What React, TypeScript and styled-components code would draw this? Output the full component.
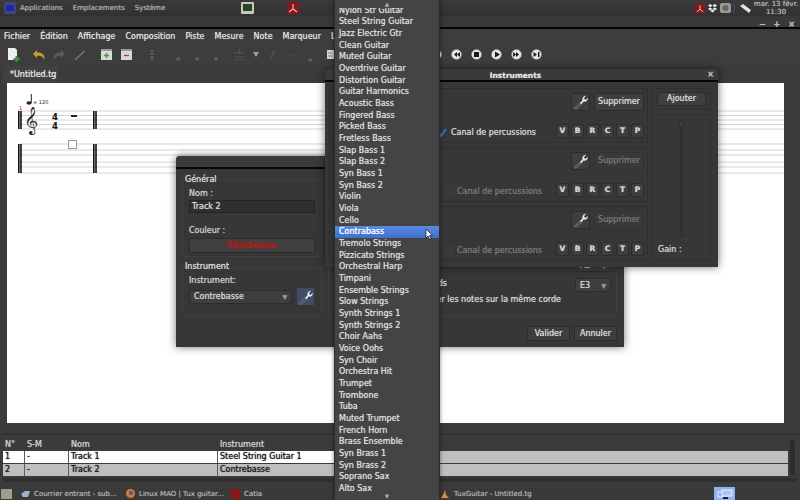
import React from "react";
import styled, { createGlobalStyle } from "styled-components";

const Global = createGlobalStyle`
  html, body { margin: 0; padding: 0; background: #3a3a3a; }
  * { box-sizing: border-box; }
  body { font-family: "DejaVu Sans", sans-serif; font-size: 8px; }
`;

const Desktop = styled.div`
  position: relative; width: 800px; height: 500px; overflow: hidden;
  display: flex; flex-direction: column; background: #3b3b3b; color: #ddd;
  text-shadow: 0 0 .7px currentColor;
`;
const TopPanel = styled.div`
  height: 16px; display: flex; align-items: center; padding-left: 4px; position: relative;
  background: linear-gradient(#3a3a3a, #323232); color: #a8a8a8; font-size: 7px;
`;
const PanelMenu = styled.span<{ $gap?: number }>`margin-left: ${p => p.$gap ?? 0}px;`;
const PanelIconSlot = styled.span<{ $gap: number }>`margin-left: ${p => p.$gap}px; display: flex;`;
const Tray = styled.div`margin-left: auto; display: flex; align-items: center; height: 16px; gap: 3px;`;
const Clock = styled.div`
  width: 48px; text-align: center; font-size: 7px; line-height: 8px; color: #b0b0b0; margin-left: -3px;
`;
const TitleBar = styled.div`
  height: 12px; display: flex; justify-content: flex-end; align-items: center; gap: 8px; padding: 4px 5px 0 0;
  background: linear-gradient(#383838, #3a3a3a); color: #bbb; font-size: 8px; font-weight: 700;
`;
const BlackLine = styled.div`height: 2px; background: #050505; margin-top: -1px;`;
const MenuBar = styled.div`
  height: 15px; display: flex; align-items: center; gap: 10px; padding-left: 4px; background: #3d3d3d;
  color: #dedede; font-size: 8px;
`;
const Toolbar = styled.div`height: 22px; display: flex; align-items: center; padding-left: 3px; background: #3d3d3d;`;
const ToolSlot = styled.div<{ $gap: number }>`
  width: 20px; height: 20px; display: flex; align-items: center; justify-content: center; margin-left: ${p => p.$gap}px;
`;
const TabBar = styled.div`height: 17px; display: flex; padding-left: 3px; align-items: flex-end; background: #3b3b3b;`;
const Tab = styled.div`
  width: 55px; height: 17px; background: #414141; border-radius: 2px 2px 0 0; padding-left: 7px;
  font-size: 8px; line-height: 17px; color: #e2e2e2; white-space: nowrap;
`;
const ScoreArea = styled.div`height: 340px; padding-left: 7px; padding-right: 16px; background: #3b3b3b;`;
const ScorePage = styled.div`height: 340px; background: #fff;`;
const HScroll = styled.div`height: 16px; padding: 10px 2px 0; background: #3b3b3b;`;
const HScrollBar = styled.div`height: 2px; background: #333;`;

const TrackArea = styled.div`height: 39px; display: flex; padding-left: 3px; background: #3b3b3b;`;
const TrackTable = styled.div`width: 785px; display: flex; flex-direction: column; gap: 1px;`;
const VScroll = styled.div`width: 5px; margin: 1px 0 2px 2px; background: #2d2d2d; border-radius: 2px;`;
const TableRow = styled.div`
  height: 12px; display: grid; grid-template-columns: 21px 43px 148px 180px 1fr; gap: 1px; background: #5c5c5c;
`;
const TableHead = styled(TableRow)`height: 11px; background: #3b3b3b;`;
const HeadCell = styled.div`padding-left: 2px; line-height: 11px; font-size: 8px; color: #ccc; background: #3b3b3b;`;
const BodyCell = styled.div<{ $bg: string }>`
  padding-left: 2px; line-height: 12px; font-size: 8px; color: #1c1c1c; background: ${p => p.$bg};
  overflow: hidden; white-space: nowrap; text-shadow: 0 0 1px #1c1c1c;
`;
const Gutter = styled.div`height: 10px; padding: 1px 2px; background: #3b3b3b;`;
const GutterBar = styled.div`height: 4px; background: #2f2f2f; border-radius: 2px;`;
const TaskBar = styled.div`
  height: 13px; display: flex; align-items: center; background: #3a3a3a; color: #a8a8a8; font-size: 7px;
`;
const TaskItem = styled.div<{ $w: number }>`width: ${p => p.$w}px; display: flex; align-items: center; gap: 4px; white-space: nowrap;`;
const WorkspaceActive = styled.div`
  width: 21px; height: 13px; background: #8fb0f2; display: flex; align-items: center; justify-content: center; margin-left: auto; margin-right: 65px;
`;

const Window = styled.div<{ $x: number; $y: number; $w: number; $h: number; $z: number }>`
  position: absolute; left: ${p => p.$x}px; top: ${p => p.$y}px; width: ${p => p.$w}px; height: ${p => p.$h}px; z-index: ${p => p.$z};
  background: #373737; border-radius: 4px 4px 0 0; display: flex; flex-direction: column;
  box-shadow: 0 0 9px rgba(0,0,0,.55);
`;
const WinTitle = styled.div`
  height: 11px; flex: none; text-align: center; padding: 2px 12px 0 0; line-height: 9px; font-size: 7.5px; font-weight: 700; color: #ddd; position: relative;
  background: #3a3a3a; border-radius: 4px 4px 0 0;
`;
const WinClose = styled.span`position: absolute; right: 4px; top: 1px; color: #bbb; font-size: 8px; font-weight: 700;`;
const WinRule = styled.div`height: 2px; flex: none; background: #050505;`;

const TrackBody = styled.div`
  flex: 1; padding: 10px 7px 6px 6px; display: grid; grid-template-columns: 140px 1fr; grid-template-rows: 78px 49px 1fr; gap: 10px 6px;
`;
const Group = styled.div<{ $row?: string; $col?: string }>`
  border: 1px solid #3f3f3f; display: flex; flex-direction: column;
  ${p => p.$row ? `grid-row: ${p.$row};` : ""} ${p => p.$col ? `grid-column: ${p.$col};` : ""}
`;
const GroupTitle = styled.div<{ $lift: number }>`font-size: 8px; color: #d8d8d8; line-height: 10px; padding-left: 2px; margin-top: -${p => p.$lift}px;`;
const FieldLabel = styled.div<{ $top?: number }>`font-size: 8px; line-height: 10px; color: #c8c8c8; margin-top: ${p => p.$top ?? 0}px;`;
const GroupInner = styled.div`padding: 4px 6px 0 6px; display: flex; flex-direction: column;`;
const NameInput = styled.div`
  height: 13px; margin-top: 1px; background: #2f2f2f; border: 1px solid #242424; padding-left: 2px; line-height: 11px; font-size: 8px; color: #d4d4d4;
`;
const ColorButton = styled.div`
  height: 15px; margin-top: 2px; background: #404040; border: 1px solid #2b2b2b; text-align: center; line-height: 13px; font-size: 8px; color: #d01010;
`;
const InstrumentRow = styled.div`display: flex; align-items: center; gap: 5px; margin-top: 2px;`;
const Combo = styled.div<{ $w: number }>`
  width: ${p => p.$w}px; height: 14px; background: #3e3e3e; border: 1px solid #2d2d2d; border-radius: 2px; display: flex; align-items: center;
  justify-content: space-between; padding: 0 4px; font-size: 8px; color: #d0d0d0;
`;
const ComboArrow = styled.span`font-size: 6px; color: #999;`;
const BlueTool = styled.div`width: 17px; height: 17px; background: #3f4d6a; display: flex; align-items: center; justify-content: center;`;
const TuningGroup = styled(Group)`justify-content: flex-end; padding: 0 5px 9px;`;
const TuningRow = styled.div<{ $below: number }>`display: flex; justify-content: flex-end; align-items: center; height: 14px; margin-bottom: ${p => p.$below}px;`;
const TuningLabel = styled.span<{ $right: number; $raise?: number }>`
  margin-right: ${p => p.$right}px; padding-bottom: ${p => p.$raise ?? 0}px; color: #d0d0d0; font-size: 8px; white-space: nowrap;
`;
const Footer = styled.div`grid-column: 1 / 3; display: flex; justify-content: flex-end; align-items: flex-end; gap: 4px;`;
const ActionButton = styled.div`
  width: 43px; height: 15px; background: #3e3e3e; border: 1px solid #2c2c2c; border-radius: 2px; text-align: center; line-height: 13px; font-size: 8px; color: #d8d8d8;
`;

const InstrumentsBody = styled.div`flex: 1; display: grid; grid-template-columns: 1fr 59px; gap: 4px; padding: 6px 7px 6px 4px;`;
const ChannelColumn = styled.div`display: flex; flex-direction: column; gap: 4px;`;
const ChannelRow = styled.div`
  height: 55px; border: 1px solid #2f2f2f; padding: 4px 3px; display: flex; flex-direction: column; justify-content: space-between;
`;
const ChannelLine = styled.div`display: flex; justify-content: flex-end; align-items: center; gap: 4px;`;
const ToolButton = styled.div`
  width: 19px; height: 18px; background: #3e3e3e; border: 1px solid #2c2c2c; border-radius: 2px; display: flex; align-items: center; justify-content: center;
`;
const RemoveButton = styled.div<{ $off?: boolean }>`
  width: 50px; height: 18px; background: ${p => p.$off ? "#393939" : "#3e3e3e"}; border: 1px solid ${p => p.$off ? "#333" : "#2c2c2c"}; border-radius: 2px;
  text-align: center; line-height: 16px; font-size: 8px; color: ${p => p.$off ? "#757575" : "#d8d8d8"};
`;
const PercLabel = styled.span<{ $off?: boolean; $right: number }>`
  font-size: 8px; white-space: nowrap; padding-top: 3px; color: ${p => p.$off ? "#777" : "#d0d0d0"}; margin-right: ${p => p.$right}px;
`;
const PercBox = styled.span`width: 7px; height: 7px; margin: 3px 1px 0 0; border: 1px solid #424242;`;
const TickMark = styled.svg`margin-top: 2px;`;
const MiniButtons = styled.div`display: flex; gap: 2px;`;
const MiniButton = styled.div`
  width: 13px; height: 14px; background: #3e3e3e; border: 1px solid #2c2c2c; border-radius: 2px; text-align: center; line-height: 12px; font-size: 7.5px; font-weight: 700; color: #cfcfcf;
`;
const SideColumn = styled.div`display: flex; flex-direction: column; gap: 4px;`;
const AddBox = styled.div`height: 22px; border: 1px solid #2f2f2f; padding: 3px 4px;`;
const AddButton = styled.div`height: 14px; background: #3f3f3f; border: 1px solid #2c2c2c; border-radius: 2px; text-align: center; line-height: 12px; font-size: 8px; color: #d8d8d8;`;
const GainBox = styled.div`flex: 1; border: 1px solid #2f2f2f; display: flex; flex-direction: column; align-items: center;`;
const SliderTrack = styled.div`flex: 1; width: 3px; background: #313131; position: relative; margin: 5px 0 1px;`;
const SliderThumb = styled.div`
  position: absolute; left: -2px; top: 0; width: 7px; height: 7px; border-radius: 50%; background: #3c3c3c; border: 1px solid #2a2a2a;
`;
const GainLabel = styled.div`align-self: stretch; height: 21px; border-top: 1px solid #3c3c3c; padding-left: 5px; line-height: 20px; font-size: 8px; color: #d0d0d0;`;

const DropMenu = styled.div`
  position: absolute; left: 334px; top: 0; width: 106px; height: 500px; z-index: 5; background: #444; border-left: 1px solid #2c2c2c; border-right: 1px solid #2c2c2c;
  display: flex; flex-direction: column; box-shadow: 0 0 4px rgba(0,0,0,.5);
`;
const ScrollCap = styled.div`height: 8px; flex: none; text-align: center; line-height: 8px; font-size: 5px; color: #aaa;`;
const MenuList = styled.div`flex: 1; overflow: hidden; display: flex; flex-direction: column;`;
const MenuRow = styled.div<{ $active?: boolean }>`
  height: 11.68px; flex: none; padding-left: 4px; line-height: 11.68px; font-size: 8px; white-space: nowrap; color: ${p => p.$active ? "#fff" : "#dadada"};
  background: ${p => p.$active ? "linear-gradient(#5a8ae0, #3f70c8)" : "transparent"}; position: relative;
  &:first-child { margin-top: -3.4px; }
`;
const Cursor = styled.svg`position: absolute; left: 90px; top: 3px;`;
const WorkspaceFirst = styled.svg`margin-left: 1px;`;

const Wrench = ({ s = 16 }: { s?: number }) => (
  <svg width={s} height={s} viewBox="0 0 16 16">
    <path d="M1.5 14.5 L7 8.5 L8.8 10 L3 15.5Z" fill="#4e4e4e" stroke="#999" strokeWidth=".5" />
    <path d="M7 9 L9.5 6.2 C9 4 10.5 1.8 13 1.8 L11 4.2 L12.3 6 L14.8 4 C15 6.6 12.8 8.3 10.6 7.6 L8.5 10.2Z" fill="#e8e8e8" />
  </svg>
);

const Circle = ({ d }: { d: string }) => (
  <svg width="11" height="11" viewBox="0 0 11 11">
    <circle cx="5.5" cy="5.5" r="5" fill="#e6e6e6" stroke="#888" strokeWidth=".5" />
    <path d={d} fill="#1a1a1a" />
  </svg>
);

const dim = "#5d5d5d";
const NoteIcon = ({ y = 12 }: { y?: number }) => (
  <svg width="10" height="16" viewBox="0 0 10 16"><ellipse cx="4" cy={y} rx="2" ry="1.5" fill={dim} /><path d={`M5.5 ${y}V${y - 2}`} stroke={dim} /></svg>
);

const tools: { gap: number; node: React.ReactNode }[] = [
  { gap: 0, node: <svg width="13" height="15" viewBox="0 0 13 15"><path d="M1 1h7l2 2v10H1z" fill="#efefef" /><path d="M8.5 9h2v2h2v2h-2v2h-2v-2h-2v-2h2z" fill="#3f9a3c" /></svg> },
  { gap: 6, node: <svg width="14" height="12" viewBox="0 0 14 12"><path d="M1 5 L5 1 V3.5 C10 3.3 13 5.5 12.5 11 C11.5 8 9 6.5 5 6.8 V9z" fill="#c9a02c" /></svg> },
  { gap: 0, node: <svg width="14" height="12" viewBox="0 0 14 12"><path d="M13 5 L9 1 V3.5 C4 3.3 1 5.5 1.5 11 C2.5 8 5 6.5 9 6.8 V9z" fill="#5b5b5b" /></svg> },
  { gap: 1, node: <svg width="12" height="12" viewBox="0 0 12 12"><path d="M1 11 L10.5 2" stroke="#8a6f4e" strokeWidth="1.6" /></svg> },
  { gap: 6, node: <svg width="11" height="11" viewBox="0 0 11 11"><rect width="11" height="11" fill="#d8d8d8" /><rect width="11" height="2" fill="#9a9a9a" /><path d="M5.5 4v5M3 6.5h5" stroke="#3f9a3c" strokeWidth="1.3" /></svg> },
  { gap: 0, node: <svg width="11" height="11" viewBox="0 0 11 11"><rect width="11" height="11" fill="#d8d8d8" /><rect width="11" height="2" fill="#9a9a9a" /><path d="M3 6.5h5" stroke="#b03a3a" strokeWidth="1.3" /></svg> },
  { gap: 6, node: <svg width="6" height="12" viewBox="0 0 6 12"><path d="M3 1v10" stroke={dim} strokeWidth="3" strokeDasharray="2 1" /></svg> },
  { gap: 7, node: <NoteIcon /> },
  { gap: -1, node: <NoteIcon /> },
  { gap: -1, node: <NoteIcon /> },
  { gap: 2, node: <svg width="12" height="14" viewBox="0 0 12 14"><path d="M1 5h10M2 9h8M1 12h10" stroke={dim} strokeDasharray="2 1" /><path d="M6 1v5" stroke={dim} /></svg> },
  { gap: -3, node: <svg width="6" height="5" viewBox="0 0 6 5"><path d="M0 0h6L3 5z" fill="#a0a0a0" /></svg> },
  { gap: -4, node: <svg width="8" height="10" viewBox="0 0 8 10"><path d="M2 9L6 1" stroke={dim} /></svg> },
  { gap: 0, node: <svg width="8" height="4" viewBox="0 0 8 4"><path d="M1 2h6" stroke="#4d4d4d" /></svg> },
  { gap: -1, node: <NoteIcon y={13} /> },
  { gap: -1, node: <svg width="7" height="9" viewBox="0 0 7 9"><rect width="7" height="9" fill="#d0d0d0" /><path d="M1 3h5M1 6h5" stroke="#888" /></svg> },
];

const transport = [
  "M6 3L3 5.5 6 8zM9 3L6 5.5 9 8z",
  "M3 3h5v5H3z",
  "M4 2.5L9 5.5 4 8.5z",
  "M2 3L5 5.5 2 8zM5 3L8 5.5 5 8z",
  "M2.5 3L6 5.5 2.5 8zM7 3h1.5v5H7z",
];

const instruments = [
  "Nylon Str Guitar", "Steel String Guitar", "Jazz Electric Gtr", "Clean Guitar", "Muted Guitar", "Overdrive Guitar",
  "Distortion Guitar", "Guitar Harmonics", "Acoustic Bass", "Fingered Bass", "Picked Bass", "Fretless Bass", "Slap Bass 1",
  "Slap Bass 2", "Syn Bass 1", "Syn Bass 2", "Violin", "Viola", "Cello", "Contrabass", "Tremolo Strings", "Pizzicato Strings",
  "Orchestral Harp", "Timpani", "Ensemble Strings", "Slow Strings", "Synth Strings 1", "Synth Strings 2", "Choir Aahs",
  "Voice Oohs", "Syn Choir", "Orchestra Hit", "Trumpet", "Trombone", "Tuba", "Muted Trumpet", "French Horn", "Brass Ensemble",
  "Syn Brass 1", "Syn Brass 2", "Soprano Sax", "Alto Sax",
];

const Score = () => {
  const staff = [28, 32.5, 37, 41.5, 46];
  const tab = [61, 67, 72, 79, 84, 90];
  return (
    <svg width="777" height="340" viewBox="0 0 777 340">
      {[...staff, ...tab].map(y => <path key={y} d={`M12 ${y}H777`} stroke="#d4d4d4" strokeWidth="1" />)}
      {[11, 86].map(x => (
        <g key={x} fill="#111">
          <rect x={x} y="28" width="1.6" height="18" /><rect x={x + 2.2} y="28" width="1.6" height="18" />
          <rect x={x} y="61" width="1.6" height="29" /><rect x={x + 2.2} y="61" width="1.6" height="29" />
        </g>
      ))}
      <text x="12" y="27" fontSize="5" fill="#e02020" fontFamily="DejaVu Sans">1</text>
      <ellipse cx="22" cy="20" rx="2.6" ry="1.8" fill="#222" />
      <path d="M24.3 20V11" stroke="#222" strokeWidth="1" />
      <text x="26" y="21" fontSize="5" fill="#333" fontFamily="DejaVu Sans">= 120</text>
      <text x="17" y="45" fontSize="24" fill="#222" fontFamily="DejaVu Sans">𝄞</text>
      <text x="45" y="36.5" fontSize="8.5" fontWeight="700" fill="#111" fontFamily="DejaVu Sans">4</text>
      <text x="45" y="46" fontSize="8.5" fontWeight="700" fill="#111" fontFamily="DejaVu Sans">4</text>
      <rect x="64" y="32" width="6" height="2" fill="#222" />
      <rect x="61.5" y="57.5" width="8" height="8" fill="#fff" stroke="#999" />
    </svg>
  );
};

export default function App() {
  return (
    <Desktop>
      <Global />
      <TopPanel>
        <svg width="12" height="12" viewBox="0 0 12 12"><rect width="12" height="12" rx="2" fill="#3a4a7a" /><rect x="2" y="3" width="8" height="6" fill="#2420b0" /></svg>
        <PanelMenu $gap={4}>Applications</PanelMenu>
        <PanelMenu $gap={10}>Emplacements</PanelMenu>
        <PanelMenu $gap={10}>Système</PanelMenu>
        <PanelIconSlot $gap={76}>
          <svg width="13" height="12" viewBox="0 0 13 12"><rect width="13" height="12" rx="1" fill="#c8c8b8" /><rect x="2" y="2" width="9" height="7" fill="#27432c" /></svg>
        </PanelIconSlot>
        <PanelIconSlot $gap={33}>
          <svg width="12" height="12" viewBox="0 0 12 12"><rect width="12" height="12" fill="#8a1616" /><path d="M6 2v5L2 10M6 7l4 3" stroke="#d8b8c8" strokeWidth="1.2" fill="none" /></svg>
        </PanelIconSlot>
        <Tray>
          <svg width="10" height="11" viewBox="0 0 12 12"><rect width="12" height="12" fill="#8a1616" /><path d="M6 2v5L2 10M6 7l4 3" stroke="#d8b8c8" strokeWidth="1.2" fill="none" /></svg>
          <svg width="9" height="9" viewBox="0 0 9 9"><path d="M2.2 0L4.5 1.6 2.2 3.2 0 1.6zM6.8 0L9 1.6 6.8 3.2 4.5 1.6zM2.2 3.4L4.5 5 2.2 6.6 0 5zM6.8 3.4L9 5 6.8 6.6 4.5 5zM4.5 5.6L6.5 7 4.5 8.6 2.5 7z" fill="#f0f0f0" /></svg>
          <svg width="16" height="12" viewBox="0 0 16 12"><rect x="0" y="1" width="11" height="10" rx="2" fill="#9a9a9a" /><circle cx="5.5" cy="6" r="3" fill="#666" /><path d="M13 1c2 3 2 7 0 10" stroke="#3c5a8a" fill="none" /></svg>
          <svg width="13" height="11" viewBox="0 0 13 11"><path d="M1 3L4 1 12 7 10 10z" fill="#e2e2e2" /></svg>
          <Clock>mar. 13 févr.<br />11:30</Clock>
        </Tray>
      </TopPanel>
      <TitleBar><span>−</span><span>+</span><span>×</span></TitleBar>
      <BlackLine />
      <MenuBar>
        {["Fichier", "Édition", "Affichage", "Composition", "Piste", "Mesure", "Note", "Marqueur", "L"].map(m => <span key={m}>{m}</span>)}
      </MenuBar>
      <Toolbar>
        {tools.map((t, i) => <ToolSlot key={i} $gap={t.gap}>{t.node}</ToolSlot>)}
        <ToolSlot $gap={86}><Circle d="M2 3h1v5H2zM4 3l3 2.5L4 8z" /></ToolSlot>
        {transport.map(d => <ToolSlot key={d} $gap={0}><Circle d={d} /></ToolSlot>)}
      </Toolbar>
      <TabBar><Tab>*Untitled.tg</Tab></TabBar>
      <ScoreArea><ScorePage><Score /></ScorePage></ScoreArea>
      <HScroll><HScrollBar /></HScroll>
      <TrackArea>
        <TrackTable>
          <TableHead>
            <HeadCell>N°</HeadCell><HeadCell>S-M</HeadCell><HeadCell>Nom</HeadCell><HeadCell>Instrument</HeadCell><HeadCell />
          </TableHead>
          <TableRow>
            <BodyCell $bg="#fff">1</BodyCell><BodyCell $bg="#fff">-</BodyCell><BodyCell $bg="#fff">Track 1</BodyCell>
            <BodyCell $bg="#fff">Steel String Guitar 1</BodyCell><BodyCell $bg="#bfbfbf" />
          </TableRow>
          <TableRow>
            <BodyCell $bg="#bfbfbf">2</BodyCell><BodyCell $bg="#bfbfbf">-</BodyCell><BodyCell $bg="#bfbfbf">Track 2</BodyCell>
            <BodyCell $bg="#bfbfbf">Contrebasse</BodyCell><BodyCell $bg="#bfbfbf" />
          </TableRow>
        </TrackTable>
        <VScroll />
      </TrackArea>
      <Gutter><GutterBar /></Gutter>
      <TaskBar>
        <TaskItem $w={21}><WorkspaceFirst width="11" height="10" viewBox="0 0 11 10"><rect width="11" height="10" fill="#9aa08a" /></WorkspaceFirst></TaskItem>
        <TaskItem $w={105}><svg width="9" height="8" viewBox="0 0 9 8"><path d="M0 4L4 1h5L7 7H2z" fill="#9fb4d0" /></svg><span>Courrier entrant - sub...</span></TaskItem>
        <TaskItem $w={105}><svg width="9" height="9" viewBox="0 0 9 9"><circle cx="4.5" cy="4.5" r="4.5" fill="#e07a20" /><circle cx="5" cy="4" r="2.2" fill="#3a63a8" /></svg><span>Linux MAO | Tux guitar...</span></TaskItem>
        <TaskItem $w={209}><svg width="9" height="10" viewBox="0 0 9 10"><rect width="9" height="10" fill="#8a1616" /></svg><span>Catia</span></TaskItem>
        <TaskItem $w={120}><svg width="10" height="10" viewBox="0 0 10 10"><path d="M5 1l1 5 3 3H1l2-3z" fill="#c89a40" /></svg><span>TuxGuitar - Untitled.tg</span></TaskItem>
        <WorkspaceActive><svg width="16" height="10" viewBox="0 0 16 10"><rect x="1" y="3" width="8" height="5" fill="none" stroke="#e8f0ff" /><rect x="5" y="1" width="10" height="6" fill="#a8c4f8" stroke="#e8f0ff" /><rect x="6" y="8" width="5" height="2" fill="#222" /></svg></WorkspaceActive>
      </TaskBar>

      <Window $x={176} $y={156} $w={448} $h={191} $z={2}>
        <WinTitle />
        <WinRule />
        <TrackBody>
          <Group $row="1" $col="1">
            <GroupTitle $lift={5}>Général</GroupTitle>
            <GroupInner>
              <FieldLabel>Nom :</FieldLabel>
              <NameInput>Track 2</NameInput>
              <FieldLabel $top={13}>Couleur :</FieldLabel>
              <ColorButton>Sélectionner</ColorButton>
            </GroupInner>
          </Group>
          <TuningGroup $row="1 / 3" $col="2">
            <TuningRow $below={6}><Combo $w={36}>A3<ComboArrow>▼</ComboArrow></Combo></TuningRow>
            <TuningRow $below={0}><TuningLabel $right={128} $raise={3}>Accords</TuningLabel><Combo $w={36}>E3<ComboArrow>▼</ComboArrow></Combo></TuningRow>
            <TuningRow $below={0}><TuningLabel $right={50}>Laisser les notes sur la même corde</TuningLabel></TuningRow>
          </TuningGroup>
          <Group $row="2" $col="1">
            <GroupTitle $lift={6}>Instrument</GroupTitle>
            <GroupInner>
              <FieldLabel>Instrument:</FieldLabel>
              <InstrumentRow><Combo $w={103}>Contrebasse<ComboArrow>▼</ComboArrow></Combo><BlueTool><Wrench /></BlueTool></InstrumentRow>
            </GroupInner>
          </Group>
          <Footer><ActionButton>Valider</ActionButton><ActionButton>Annuler</ActionButton></Footer>
        </TrackBody>
      </Window>

      <Window $x={325} $y={69} $w={393} $h={198} $z={3}>
        <WinTitle>Instruments<WinClose>×</WinClose></WinTitle>
        <WinRule />
        <InstrumentsBody>
          <ChannelColumn>
            {[false, true, true].map((off, i) => (
              <ChannelRow key={i}>
                <ChannelLine><ToolButton><Wrench /></ToolButton><RemoveButton $off={off}>Supprimer</RemoveButton></ChannelLine>
                <ChannelLine>
                  {off ? <PercBox /> : <TickMark width="9" height="9" viewBox="0 0 9 9"><path d="M1 5l2 3 5-7" fill="none" stroke="#3c6fd0" strokeWidth="1.8" /></TickMark>}
                  <PercLabel $off={off} $right={off ? 10 : 16}>Canal de percussions</PercLabel>
                  <MiniButtons>{["V", "B", "R", "C", "T", "P"].map(b => <MiniButton key={b}>{b}</MiniButton>)}</MiniButtons>
                </ChannelLine>
              </ChannelRow>
            ))}
          </ChannelColumn>
          <SideColumn>
            <AddBox><AddButton>Ajouter</AddButton></AddBox>
            <GainBox>
              <SliderTrack><SliderThumb /></SliderTrack>
              <GainLabel>Gain :</GainLabel>
            </GainBox>
          </SideColumn>
        </InstrumentsBody>
      </Window>

      <DropMenu>
        <ScrollCap>▲</ScrollCap>
        <MenuList>
          {instruments.map(n => (
            <MenuRow key={n} $active={n === "Contrabass"}>
              {n}
              {n === "Contrabass" && (
                <Cursor width="8" height="11" viewBox="0 0 8 11"><path d="M1 0v9l2-2 1.5 3.5 1.5-.7L4.5 6.5H7.5z" fill="#fff" stroke="#111" strokeWidth=".7" /></Cursor>
              )}
            </MenuRow>
          ))}
        </MenuList>
        <ScrollCap>▼</ScrollCap>
      </DropMenu>
    </Desktop>
  );
}
